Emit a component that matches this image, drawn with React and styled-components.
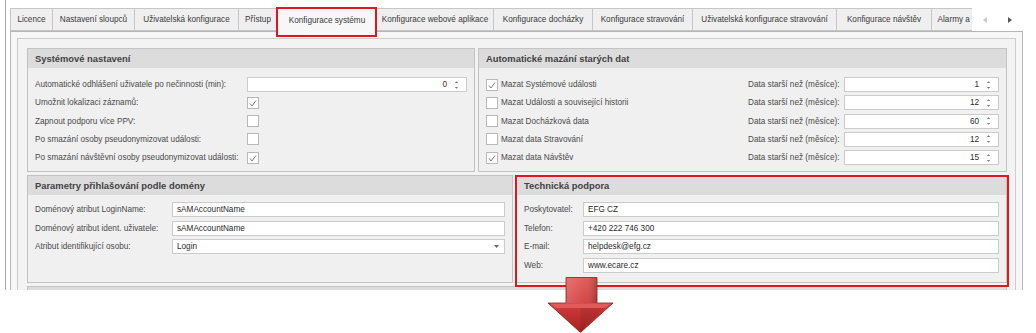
import React from 'react';
import styled, { createGlobalStyle } from 'styled-components';

const GlobalStyle = createGlobalStyle`
  html, body { margin: 0; padding: 0; background: #fff; }
  body { font-family: "Liberation Sans", Arial, sans-serif; }
`;

const Screen = styled.div`
  position: relative;
  width: 1036px;
  height: 333px;
  overflow: hidden;
  background: #fff;
  font-family: "Liberation Sans", Arial, sans-serif;
  font-size: 8.2px;
  color: #4a4a4a;
`;

const Window = styled.div`
  box-sizing: border-box;
  margin-left: 5px;
  width: 1031px;
  height: 290px;
  border-left: 1px solid #a7a7a7;
  padding: 8px 0 0 4px;
  overflow: hidden;
`;

// Záložky nahoře
const TabBar = styled.div`
  position: relative;
  z-index: 1;
  display: flex;
  width: 1013px;
  height: 23px;
`;

const TabList = styled.div`
  display: flex;
  align-items: flex-start;
  width: 962px;
  height: 25px;
  overflow: hidden;
`;

const Tab = styled.div`
  flex: none;
  box-sizing: border-box;
  width: ${p => p.$w + 1}px;
  height: ${p => (p.$active ? 25 : 23)}px;
  margin-right: -1px;
  border: 1px solid #c6c6c6;
  border-bottom: ${p => (p.$active ? 'none' : '1px solid #c6c6c6')};
  background: ${p => (p.$active ? '#f7f7f7' : '#efefef')};
  display: flex;
  align-items: center;
  justify-content: center;
  padding-bottom: ${p => (p.$active ? 1 : 0)}px;
  white-space: nowrap;
  color: #3a3a3a;
  position: relative;
  z-index: ${p => (p.$active ? 2 : 1)};
`;

const TabScroll = styled.div`
  flex: 1;
  display: flex;
  align-items: center;
  gap: 21px;
  padding-left: 11px;
  height: 23px;
`;

const Panel = styled.div`
  box-sizing: border-box;
  width: 1013px;
  height: 400px;
  border: 1px solid #b6b6b6;
  background: #f7f7f7;
  padding: 6px 6px 0 6px;
`;

const Inner = styled.div`
  box-sizing: border-box;
  height: 400px;
  border: 1px solid #cdcdcd;
  background: #f3f3f3;
  padding: 9px 8px 9px 9px;
  display: flex;
  flex-direction: column;
  gap: 3px;
`;

const GroupRow = styled.div`
  display: flex;
  gap: 3px;
`;

const Group = styled.div`
  box-sizing: border-box;
  ${p => (p.$w ? `width: ${p.$w}px; flex: none;` : 'flex: 1;')}
  border: 1px solid #c3c3c3;
  background: #f0f0f0;
  display: flex;
  flex-direction: column;
  ${p => (p.$h ? `height: ${p.$h}px;` : '')}
`;

const GroupHeader = styled.div`
  height: 19px;
  background: #dcdcdc;
  padding-left: 7px;
  display: flex;
  align-items: center;
  font-weight: bold;
  font-size: 9.4px;
  color: #424242;
`;

const GroupBody = styled.div`
  padding: ${p => p.$top}px 7px 6px 7px;
  display: flex;
  flex-direction: column;
  gap: ${p => p.$gap}px;
`;

const FormRow = styled.div`
  display: grid;
  grid-template-columns: ${p => p.$cols};
  align-items: center;
  height: 15px;
`;

const Label = styled.span`
  white-space: nowrap;
  color: #4a4a4a;
`;

const Field = styled.div`
  box-sizing: border-box;
  height: 15px;
  border: 1px solid #cbcbcb;
  background: #fff;
  display: flex;
  align-items: center;
  justify-content: ${p => (p.$right ? 'flex-end' : 'space-between')};
  gap: 7px;
  padding: 0 ${p => (p.$right ? 7 : 5)}px 0 4px;
  color: #2a2a2a;
  white-space: nowrap;
`;

const CheckBox = styled.div`
  box-sizing: border-box;
  width: 12px;
  height: 12px;
  border: 1px solid #b8b8b8;
  background: #fff;
  display: flex;
  align-items: center;
  justify-content: center;
`;

const CheckLine = styled.div`
  display: flex;
  align-items: center;
  gap: 3px;
  white-space: nowrap;
  color: #4a4a4a;
`;

const RedFrame = styled.div`
  position: absolute;
  left: ${p => p.$x}px;
  top: ${p => p.$y}px;
  width: ${p => p.$w}px;
  height: ${p => p.$h}px;
  box-sizing: border-box;
  border: 2px solid #e3161d;
  pointer-events: none;
  z-index: 5;
`;

const ArrowBox = styled.svg`
  position: absolute;
  left: 547px;
  top: 277px;
  z-index: 6;
`;

const Check = ({ on }) => (
  <CheckBox>
    {on && (
      <svg width="10" height="10" viewBox="0 0 10 10">
        <polyline points="2,5.5 4,8 8,2.5" fill="none" stroke="#6e6e6e" strokeWidth="0.9" />
      </svg>
    )}
  </CheckBox>
);

const SpinIcon = () => (
  <svg width="5" height="10" viewBox="0 0 5 10">
    <polygon points="0.8,3 2.5,1.2 4.2,3" fill="#7a7a7a" />
    <polygon points="0.8,7 4.2,7 2.5,8.8" fill="#7a7a7a" />
  </svg>
);

const DropIcon = () => (
  <svg width="5" height="3" viewBox="0 0 5 3">
    <polygon points="0,0 5,0 2.5,3" fill="#666" />
  </svg>
);

const tabs = [
  ['Licence', 42],
  ['Nastavení sloupců', 82],
  ['Uživatelská konfigurace', 104],
  ['Přístup', 39],
  ['Konfigurace systému', 99, true],
  ['Konfigurace webové aplikace', 117],
  ['Konfigurace docházky', 99],
  ['Konfigurace stravování', 100],
  ['Uživatelská konfigurace stravování', 144],
  ['Konfigurace návštěv', 95],
  ['Alarmy a události', 75],
];

const systemRows = [
  { label: 'Automatické odhlášení uživatele po nečinnosti (min):', spin: '0' },
  { label: 'Umožnit lokalizaci záznamů:', check: true },
  { label: 'Zapnout podporu více PPV:', check: false },
  { label: 'Po smazání osoby pseudonymizovat události:', check: false },
  { label: 'Po smazání návštěvní osoby pseudonymizovat události:', check: true },
];

const cleanupRows = [
  ['Mazat Systémové události', true, '1'],
  ['Mazat Události a související historii', false, '12'],
  ['Mazat Docházková data', false, '60'],
  ['Mazat data Stravování', false, '12'],
  ['Mazat data Návštěv', true, '15'],
];

const domainRows = [
  ['Doménový atribut LoginName:', 'sAMAccountName'],
  ['Doménový atribut ident. uživatele:', 'sAMAccountName'],
  ['Atribut identifikující osobu:', 'Login', true],
];

const supportRows = [
  ['Poskytovatel:', 'EFG CZ'],
  ['Telefon:', '+420 222 746 300'],
  ['E-mail:', 'helpdesk@efg.cz'],
  ['Web:', 'www.ecare.cz'],
];

export default function App() {
  return (
    <Screen>
      <GlobalStyle />
      <Window>
        <TabBar>
          <TabList>
            {tabs.map(([name, w, active]) => (
              <Tab key={name} $w={w} $active={active}>{name}</Tab>
            ))}
          </TabList>
          <TabScroll>
            <svg width="4" height="6" viewBox="0 0 4 6">
              <polygon points="4,0 4,6 0,3" fill="#c8c8c8" />
            </svg>
            <svg width="4" height="6" viewBox="0 0 4 6">
              <polygon points="0,0 0,6 4,3" fill="#585858" />
            </svg>
          </TabScroll>
        </TabBar>

        <Panel>
          <Inner>
            <GroupRow>
              <Group $w={448}>
                <GroupHeader>Systémové nastavení</GroupHeader>
                <GroupBody $top={9} $gap={3.25}>
                  {systemRows.map(r => (
                    <FormRow key={r.label} $cols="212px 1fr">
                      <Label>{r.label}</Label>
                      {r.spin !== undefined ? (
                        <Field $right>
                          <span>{r.spin}</span>
                          <SpinIcon />
                        </Field>
                      ) : (
                        <Check on={r.check} />
                      )}
                    </FormRow>
                  ))}
                </GroupBody>
              </Group>

              <Group>
                <GroupHeader>Automatické mazání starých dat</GroupHeader>
                <GroupBody $top={9} $gap={3.25}>
                  {cleanupRows.map(([label, on, months]) => (
                    <FormRow key={label} $cols="1fr 96px 155px">
                      <CheckLine>
                        <Check on={on} />
                        {label}
                      </CheckLine>
                      <Label>Data starší než (měsíce):</Label>
                      <Field $right>
                        <span>{months}</span>
                        <SpinIcon />
                      </Field>
                    </FormRow>
                  ))}
                </GroupBody>
              </Group>
            </GroupRow>

            <GroupRow>
              <Group $w={486}>
                <GroupHeader>Parametry přihlašování podle domény</GroupHeader>
                <GroupBody $top={7} $gap={3.5}>
                  {domainRows.map(([label, value, combo]) => (
                    <FormRow key={label} $cols="137px 1fr">
                      <Label>{label}</Label>
                      <Field>
                        <span>{value}</span>
                        {combo && <DropIcon />}
                      </Field>
                    </FormRow>
                  ))}
                </GroupBody>
              </Group>

              <Group $h={108}>
                <GroupHeader>Technická podpora</GroupHeader>
                <GroupBody $top={7} $gap={3.5}>
                  {supportRows.map(([label, value]) => (
                    <FormRow key={label} $cols="59px 1fr">
                      <Label>{label}</Label>
                      <Field>
                        <span>{value}</span>
                      </Field>
                    </FormRow>
                  ))}
                </GroupBody>
              </Group>
            </GroupRow>

            <GroupRow>
              <Group $h={60}>
                <GroupHeader />
              </Group>
            </GroupRow>
          </Inner>
        </Panel>
      </Window>

      <RedFrame $x={276} $y={7} $w={101} $h={30} />
      <RedFrame $x={515} $y={175} $w={494} $h={112} />

      <ArrowBox width="67" height="57" viewBox="0 0 67 57">
        <defs>
          <linearGradient id="arrowFill" x1="0" y1="0" x2="0" y2="1">
            <stop offset="0" stopColor="#e25555" />
            <stop offset="0.5" stopColor="#cf3b3b" />
            <stop offset="1" stopColor="#a82121" />
          </linearGradient>
          <linearGradient id="shaftShade" x1="0" y1="0" x2="1" y2="0">
            <stop offset="0" stopColor="#ffffff" stopOpacity="0.18" />
            <stop offset="0.6" stopColor="#ffffff" stopOpacity="0.05" />
            <stop offset="1" stopColor="#000000" stopOpacity="0.18" />
          </linearGradient>
        </defs>
        <path d="M19,0.5 H50 V26 H66 L33.5,55.5 L1,26 H19 Z" fill="url(#arrowFill)" stroke="#8e1c1c" strokeWidth="0.8" />
        <rect x="19.5" y="1" width="30" height="25" fill="url(#shaftShade)" />
        <polygon points="3,26.6 64,26.6 58,31 9,31" fill="#f07777" opacity="0.55" />
        <polygon points="33.5,31 58,31 33.5,54" fill="#000" opacity="0.08" />
      </ArrowBox>
    </Screen>
  );
}
